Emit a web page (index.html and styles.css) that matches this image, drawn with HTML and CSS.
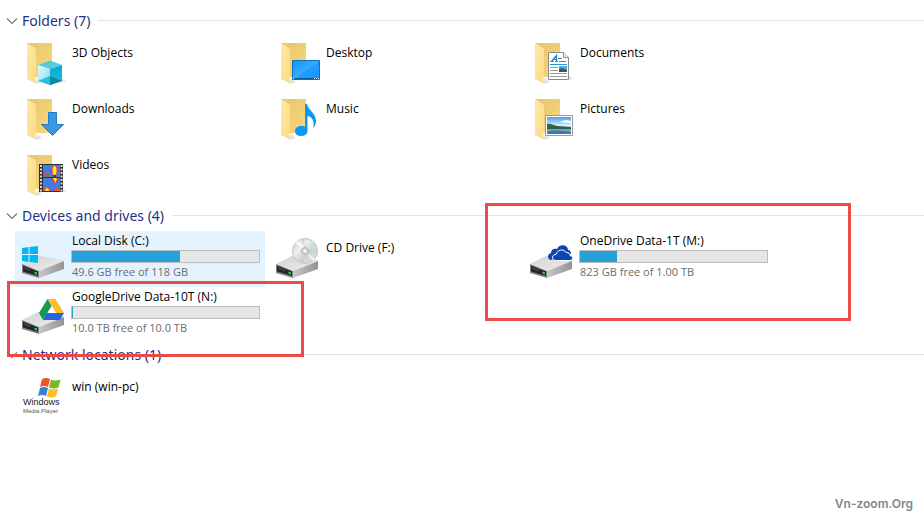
FILE: index.html
```html
<!DOCTYPE html>
<html lang="en">
<head>
<meta charset="utf-8">
<title>This PC</title>
<link rel="stylesheet" href="styles.css">
</head>
<body>
<svg class="defs" aria-hidden="true">
  <defs>
    <linearGradient id="gBack" x1="0" y1="0" x2="1" y2="1"><stop offset="0" stop-color="#e9c468"/><stop offset="1" stop-color="#f7d97f"/></linearGradient>
    <linearGradient id="gFlap" x1="0" y1="0" x2="1" y2="1"><stop offset="0" stop-color="#ffe9a6"/><stop offset="1" stop-color="#fbdb85"/></linearGradient>
    <linearGradient id="gTop" x1="0" y1="0" x2="1" y2="1"><stop offset="0" stop-color="#d2d2d3"/><stop offset="1" stop-color="#eeeeef"/></linearGradient>
    <linearGradient id="gSide" x1="0" y1="0" x2="1" y2="0"><stop offset="0" stop-color="#c9c9ca"/><stop offset="1" stop-color="#929294"/></linearGradient>
    <linearGradient id="gCubeL" x1="0" y1="0" x2="1" y2="1"><stop offset="0" stop-color="#e2f8fd"/><stop offset="1" stop-color="#7fdcef"/></linearGradient>
    <linearGradient id="gCubeR" x1="0" y1="0" x2="0" y2="1"><stop offset="0" stop-color="#0aa5cf"/><stop offset="1" stop-color="#12c6e4"/></linearGradient>
    <linearGradient id="gDesk" x1="0" y1="0" x2="1" y2="1"><stop offset="0" stop-color="#1794f5"/><stop offset=".5" stop-color="#36aaff"/><stop offset=".52" stop-color="#1d9dff"/><stop offset="1" stop-color="#1898fc"/></linearGradient>
    <linearGradient id="gSky" x1="0" y1="0" x2="0" y2="1"><stop offset="0" stop-color="#4d9ee5"/><stop offset=".5" stop-color="#d9eefa"/></linearGradient>
    <linearGradient id="gDisc" x1="0" y1="0" x2="1" y2="1"><stop offset="0" stop-color="#c4c9cb"/><stop offset=".35" stop-color="#eef1f1"/><stop offset=".6" stop-color="#cbd0d1"/><stop offset="1" stop-color="#e4e7e7"/></linearGradient>
    <g id="folder">
      <path d="M13 42l4 2 5-2-5-4z" fill="#e3e3e3"/>
      <path d="M7 3h25v34H15z" fill="url(#gBack)"/>
      <path d="M7 3l8 5c1 1 1 1 1 3v26l-1 6-8-4z" fill="url(#gFlap)"/>
      <path d="M15.500 37l1.500 0-1.500 5z" fill="#fff"/>
    </g>
    <g id="drive">
      <path d="M2 29l16-8q1-.4 2-.3l23 4.300q1 .3 1 1L19 36z" fill="url(#gTop)"/>
      <path d="M19 36l25-10v8L19 43z" fill="url(#gSide)"/>
      <path d="M2 29l17 7v7L2 38z" fill="#838385"/>
      <path d="M3 30.500l15 6v4.500L3 36.500z" fill="#242526"/>
      <path d="M4 32l7 2.500v2L4 34z" fill="#414344"/>
      <path d="M14.500 36.500l2.500 1v2l-2.500-1z" fill="#30e83b"/>
    </g>
  </defs>
</svg>
<main class="explorer">
  <section class="group">
    <h2 class="group-head"><button class="toggle" type="button"><svg class="chevron" viewBox="0 0 12 8"><path d="M1 1.500l5 5 5-5"/></svg>Folders (7)</button></h2>
    <div class="tiles">
      <a class="tile" href="#"><svg class="icon" viewBox="0 0 48 48"><use href="#folder"/><path d="M38 43l8-2-4-2z" fill="#ddd"/><path d="M18 25l12-4.500L42 25l-12 4z" fill="#55c9dd"/><path d="M18 25l12 4v16l-12-4z" fill="url(#gCubeL)"/><path d="M42 25l-12 4v16l12-4z" fill="url(#gCubeR)"/><path d="M18 41l12-5v9z" fill="#27bfd9"/><path d="M30 36l12 5-12 4z" fill="#078aa5"/></svg><span class="name">3D Objects</span></a>
      <a class="tile" href="#"><svg class="icon" viewBox="0 0 48 48"><use href="#folder"/><path d="M18.500 20.500h27v19h-27z" fill="url(#gDesk)" stroke="#0875b8"/><path d="M19 38h26v1H19z" fill="#075b91"/><path d="M19 38h1v1h-1zM40 38h1v1h-1zM42 38h1v1h-1zM44 38h1v1h-1z" fill="#fff"/></svg><span class="name">Desktop</span></a>
      <a class="tile" href="#"><svg class="icon" viewBox="0 0 48 48"><use href="#folder"/><path d="M40 40l5-1-4-3z" fill="#ddd"/><path d="M20.500 12.500h15l5 5v22h-20z" fill="#fff" stroke="#8b8b8b"/><path d="M35.500 12.500v5h5" fill="#eee" stroke="#8b8b8b"/><path d="M23.500 21.500l5-6v6M25 19.500h3.500M22.500 21.500h3M27 21.500h3" fill="none" stroke="#1684c8" stroke-width="1.200"/><path d="M30 18.500h4M31 21.500h7M22 24.500h17" stroke="#2b8fd0"/><path d="M22 27.500h8M22 30.500h8M22 33.500h17M22 36.500h17" stroke="#999"/><path d="M31 26h8v6h-8z" fill="#5aa5db"/><path d="M31 29l3-1 5 2v2h-8z" fill="#315c58"/></svg><span class="name">Documents</span></a>
      <a class="tile" href="#"><svg class="icon" viewBox="0 0 48 48"><use href="#folder"/><path d="M28.500 16.500h8v12h7L32.500 39.500 21.500 28.500h7z" fill="#3a97e4" stroke="#1e7cc8"/></svg><span class="name">Downloads</span></a>
      <a class="tile" href="#"><svg class="icon" viewBox="0 0 48 48"><use href="#folder"/><path d="M31 8h2c1 6 9 9 9 17 0 3-1 5-3 7 2-7-1-11-5.500-12V35c0 3-3 5-6.500 5s-6-2-6-5 3-5 6-5c2 0 3 .3 4 1z" fill="#0c99f2"/></svg><span class="name">Music</span></a>
      <a class="tile" href="#"><svg class="icon" viewBox="0 0 48 48"><use href="#folder"/><path d="M17.500 19.500h27v20h-27z" fill="#fff" stroke="#9b9b9b"/><path d="M19 21h24v17H19z" fill="url(#gSky)"/><path d="M19 28c4-1 6 2 11 2l13 1v3H19z" fill="#355f48"/><path d="M19 33h24v5H19z" fill="#6ea4bb"/><path d="M19 36c7-3 14-1 24 0v2H19z" fill="#3b7ba5"/><path d="M32 26l6-2 5 1v2z" fill="#fff"/></svg><span class="name">Pictures</span></a>
      <a class="tile" href="#"><svg class="icon" viewBox="0 0 48 48"><use href="#folder"/><path d="M42 40l5-1-4-2z" fill="#ddd"/><path d="M19 12h24v28H19z" fill="#303030"/><path d="M21 13v27M41.500 13v27" stroke="#d5d5d5" stroke-width="2" stroke-dasharray="2 1.500"/><path d="M23 13h17v12H23zM23 26h17v13H23z" fill="#3f7ce6"/><path d="M23 21l6 1 4 3H23z" fill="#33a35c"/><path d="M23 19l2 2 3 0 2 4h-3l-4-3z" fill="#d84469"/><ellipse cx="34.500" cy="18.500" rx="4" ry="4.500" fill="#e93e26"/><ellipse cx="34.500" cy="18.500" rx="2" ry="4.500" fill="#ffe13f"/><path d="M33 23h3v2h-3z" fill="#6b381d"/><path d="M31 26h8l-3 5h-2z" fill="#e23d2b"/><path d="M33 26h4l-1.500 5z" fill="#ffe13f"/><path d="M23 39c1-5 6-5 8 0zM34 39c0-3 5-4 6-1v1z" fill="#ec552d"/><path d="M25 39c1-4 3-4 4 0z" fill="#ffe13f"/></svg><span class="name">Videos</span></a>
    </div>
  </section>
  <section class="group">
    <h2 class="group-head"><button class="toggle" type="button"><svg class="chevron" viewBox="0 0 12 8"><path d="M1 1.500l5 5 5-5"/></svg>Devices and drives (4)</button></h2>
    <div class="tiles">
      <a class="tile drive selected" href="#"><svg class="icon" viewBox="0 0 48 48"><use href="#drive"/><path d="M2 13l6.500-1v7H2zM9.500 12l8.500-1v8H9.500zM2 20h6.500v7L2 26zM9.500 20H18v8l-8.500-1z" fill="#00b9f2"/></svg><span class="info"><span class="name">Local Disk (C:)</span><span class="bar"><span class="fill" style="width:58%"></span></span><span class="free">49.6 GB free of 118 GB</span></span></a>
      <a class="tile" href="#"><svg class="icon" viewBox="0 0 48 48"><use href="#drive"/><circle cx="31" cy="16" r="12.500" fill="url(#gDisc)" stroke="#bfc4c5"/><path d="M31 16L21 8l4-3zM31 16l8 10 2-2z" fill="#fff" opacity=".7"/><path d="M31 16l-3-12 2-.5z" fill="#eab9df" opacity=".7"/><path d="M31 16l10-6 1 3z" fill="#bdeed6" opacity=".7"/><circle cx="31" cy="16" r="3.500" fill="#cdd1d2" stroke="#b4b9ba"/><circle cx="31" cy="16" r="1.500" fill="#fff"/></svg><span class="name">CD Drive (F:)</span></a>
      <a class="tile drive" href="#"><svg class="icon" viewBox="0 0 48 48"><use href="#drive"/><path d="M23 25c-4-1-4-6 0-7 0-4 4-5 6-4 3-6 11-4 11 1 2 0 3 2 3 4z" fill="#0b47b2"/><path d="M27 25.500c-4-1-3-6 1-6 1-5 8-6 10-2 3 0 4 1 4 3 4 1 3 5 0 5z" fill="#0b47b2" stroke="#fff"/></svg><span class="info"><span class="name">OneDrive Data-1T (M:)</span><span class="bar"><span class="fill" style="width:20%"></span></span><span class="free">823 GB free of 1.00 TB</span></span></a>
      <a class="tile drive" href="#"><svg class="icon" viewBox="0 0 48 48"><use href="#drive"/><path d="M27.500 8h8L44 22h-8z" fill="#fdbf2d"/><path d="M27.500 8l4 7-8.500 14-4-7z" fill="#159a50"/><path d="M27 22h17l-4 7H23z" fill="#2a62e0"/></svg><span class="info"><span class="name">GoogleDrive Data-10T (N:)</span><span class="bar"><span class="fill" style="width:0.5%"></span></span><span class="free">10.0 TB free of 10.0 TB</span></span></a>
    </div>
  </section>
  <section class="group">
    <h2 class="group-head"><button class="toggle" type="button"><svg class="chevron" viewBox="0 0 12 8"><path d="M1 1.500l5 5 5-5"/></svg>Network locations (1)</button></h2>
    <div class="tiles">
      <a class="tile" href="#"><svg class="icon" viewBox="0 0 48 48"><path d="M22 5q4-2 8 0l-2 8q-4-2-8 0z" fill="#e8562a"/><path d="M31 5.500q4 2 9.500 0l-2 8q-5 2-9.500 0z" fill="#79b72f"/><path d="M20 14q4-2 8 0l-2 8q-4-2-8 0z" fill="#3c7ed0"/><path d="M29 14.500q4 2 9 0l-2 8q-5 2-9 0z" fill="#f8c127"/><text class="wmp-main" x="3" y="31">Windows</text><text class="wmp-sub" x="3" y="39">Media Player</text></svg><span class="name">win (win-pc)</span></a>
    </div>
  </section>
  <div class="mark mark-google"></div>
  <div class="mark mark-onedrive"></div>
</main>
<footer class="watermark">Vn-zoom.Org</footer>
</body>
</html>
```
FILE: styles.css
```css
* { box-sizing: border-box; }

body {
  margin: 0;
  min-height: 100vh;
  display: flex;
  flex-direction: column;
  background: #fff;
  color: #000;
  font: 12px/16px "Open Sans", "Noto Sans", sans-serif;
}

.defs { position: absolute; width: 0; height: 0; }

.explorer { position: relative; flex: 1; padding-top: 9px; }

.group-head {
  display: flex;
  align-items: center;
  gap: 8px;
  height: 27px;
  margin: 0;
  padding: 0 0 4px 6px;
}

.group-head::after {
  content: "";
  flex: 1;
  height: 1px;
  background: #e2e2e2;
}

.toggle {
  display: flex;
  align-items: center;
  gap: 4px;
  padding: 0;
  border: 0;
  background: none;
  color: #1e3287;
  font: 14px/20px "Noto Sans", "Open Sans", sans-serif;
}

.chevron { width: 12px; height: 8px; }
.chevron path { fill: none; stroke: #777; stroke-width: 1.2; }

.tiles {
  display: grid;
  grid-template-columns: repeat(auto-fill, 250px);
  grid-auto-rows: 56px;
  column-gap: 4px;
  padding-left: 15px;
}

.tile {
  display: flex;
  align-items: flex-start;
  gap: 3px;
  padding: 4px 5px;
  color: inherit;
  text-decoration: none;
}

.selected { background: #e5f3ff; }

.icon { flex: none; width: 48px; height: 48px; }

.name { padding: 5px 0 0 1px; white-space: nowrap; }

.info { flex: 1; display: flex; flex-direction: column; }
.drive { padding-top: 2px; }
.drive .icon { margin-top: 2px; }
.drive .name { padding-top: 0; }

.bar {
  height: 13px;
  margin: 1px 0;
  border: 1px solid #bcbcbc;
  background: #e6e6e6;
}

.fill { display: block; height: 100%; background: #26a0da; }

.free { padding-left: 1px; font-size: 11px; color: #6d6d6d; }

.wmp-main { font: 9px "Liberation Sans", sans-serif; fill: #222; }
.wmp-sub { font: 6px "Liberation Sans", sans-serif; fill: #555; }

.mark { position: absolute; border: 3px solid #eb4a46; pointer-events: none; }
.mark-google { left: 7px; top: 281px; width: 297px; height: 76px; }
.mark-onedrive { left: 485px; top: 203px; width: 366px; height: 118px; }

.watermark {
  padding: 0 11px 8px;
  text-align: right;
  color: #85858d;
  font: 600 12px/18px Inter, sans-serif;
}
```
